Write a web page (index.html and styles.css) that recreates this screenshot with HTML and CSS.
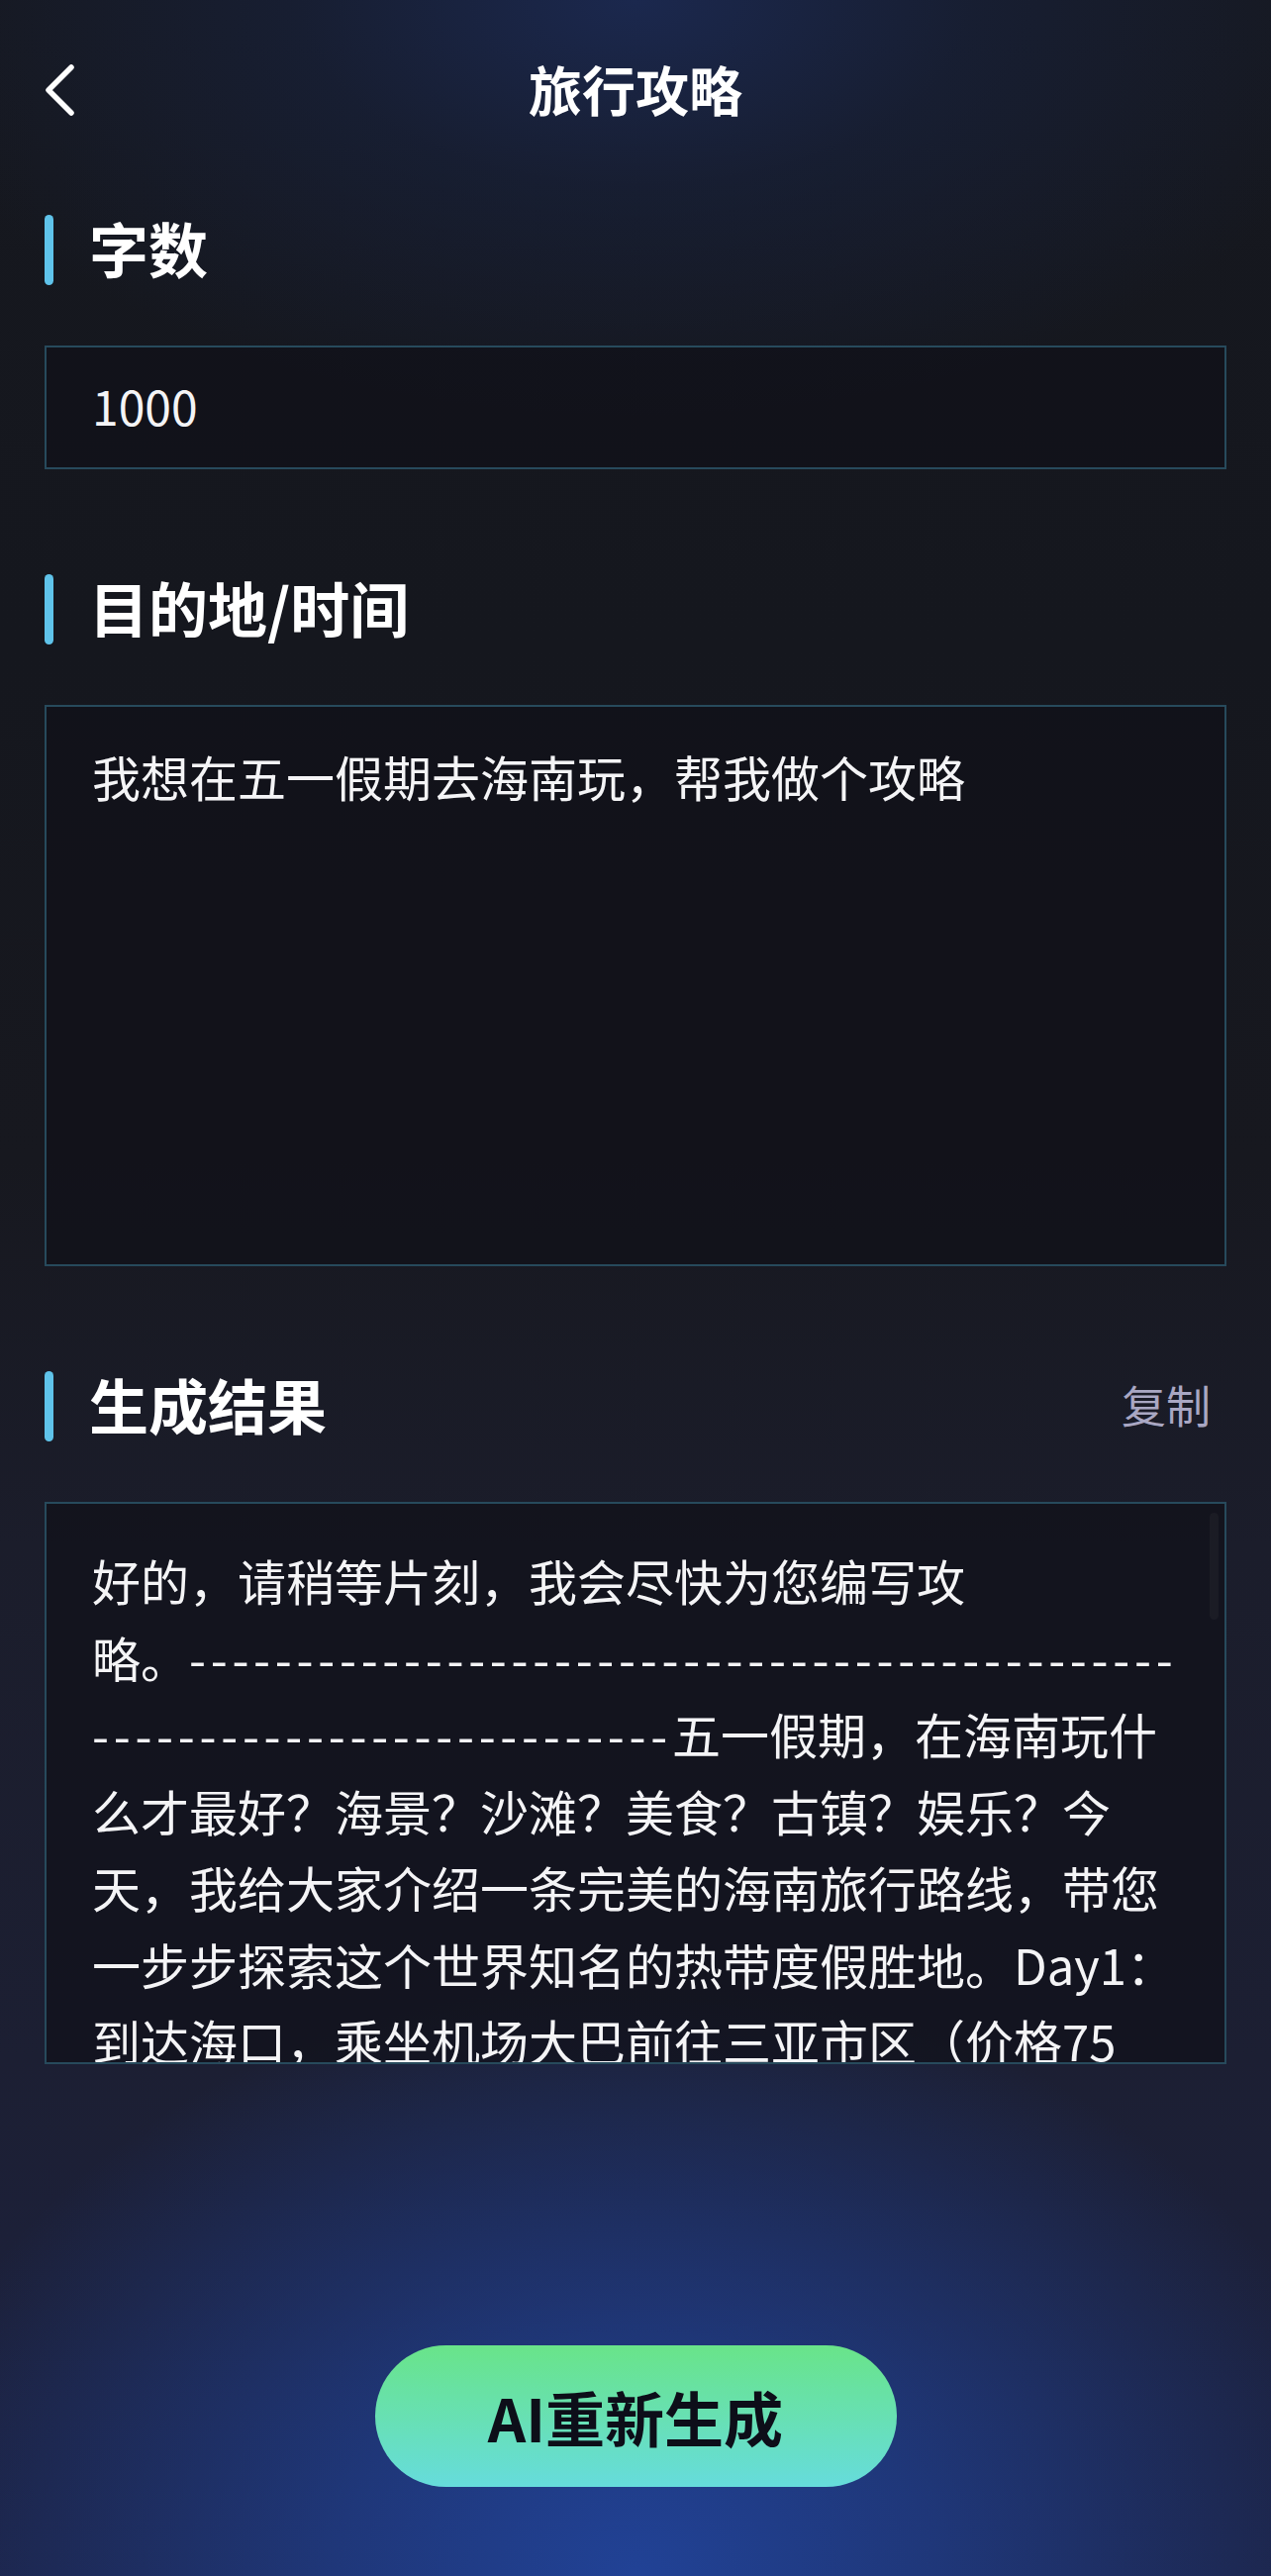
FILE: index.html
```html
<!DOCTYPE html>
<html lang="zh-CN">
<head>
<meta charset="utf-8">
<title>旅行攻略</title>
<link rel="stylesheet" href="styles.css">
</head>
<body>
<div class="page">
  <header class="nav">
    <button class="back" aria-label="返回">
      <svg width="40" height="60" viewBox="0 0 40 60"><polyline points="27,4 4,27 27,50" fill="none" stroke="#fff" stroke-width="5.5" stroke-linecap="round" stroke-linejoin="round"/></svg>
    </button>
    <h1 class="title">旅行攻略</h1>
  </header>

  <section class="section">
    <div class="sec-head"><span class="bar"></span><h2 class="sec-title">字数</h2></div>
    <div class="field field-input">1000</div>
  </section>

  <section class="section">
    <div class="sec-head"><span class="bar"></span><h2 class="sec-title">目的地/时间</h2></div>
    <div class="field field-area">我想在五一假期去海南玩，帮我做个攻略</div>
  </section>

  <section class="section">
    <div class="sec-head"><span class="bar"></span><h2 class="sec-title">生成结果</h2><span class="copy">复制</span></div>
    <div class="field field-result">
      <p class="result-text">好的，请稍等片刻，我会尽快为您编写攻<br>略。<span class="dash">----------------------------------------------</span><br><span class="dash">---------------------------</span>五一假期，在海南玩什<br>么才最好？海景？沙滩？美食？古镇？娱乐？今<br>天，我给大家介绍一条完美的海南旅行路线，带您<br>一步步探索这个世界知名的热带度假胜地。Day1：<br>到达海口，乘坐机场大巴前往三亚市区（价格75</p>
      <span class="scrollbar"></span>
    </div>
  </section>

  <div class="actions">
    <button class="regen">AI重新生成</button>
  </div>
</div>
</body>
</html>
```

FILE: styles.css
```css
* { box-sizing: border-box; }
html, body {
  margin: 0;
  padding: 0;
}
body {
  width: 1284px;
  min-height: 2602px;
  font-family: "Noto Sans CJK SC", "Noto Sans", sans-serif;
  color: #fff;
  background-color: #16181f;
}
.page {
  width: 1284px;
  min-height: 2602px;
  padding: 0 45px;
  display: flex;
  flex-direction: column;
  background:
    radial-gradient(ellipse 760px 600px at 50% 100%, rgba(33, 66, 150, 1) 0%, rgba(32, 62, 140, 0.75) 40%, rgba(30, 50, 110, 0) 100%),
    radial-gradient(ellipse 760px 420px at 50% 0%, rgba(27, 40, 78, 1) 0%, rgba(24, 34, 62, 0.6) 45%, rgba(22, 24, 31, 0) 100%),
    linear-gradient(to bottom, #16181f 0%, #15171e 25%, #17181f 45%, #1b1d2b 60%, #1c1f33 80%, #1c2242 100%);
}
.nav {
  height: 180px;
  position: relative;
  display: flex;
  align-items: center;
  justify-content: center;
}
.back {
  position: absolute;
  left: 0;
  top: 64px;
  width: 40px;
  height: 60px;
  padding: 0;
  margin: 0;
  border: 0;
  background: none;
  display: flex;
  align-items: flex-start;
}
.title {
  margin: 0;
  font-size: 54px;
  font-weight: 700;
  line-height: 1;
}
.section { display: flex; flex-direction: column; }
.section:first-of-type { margin-top: 37px; }
.sec-head {
  height: 71px;
  display: flex;
  align-items: center;
  margin-bottom: 61px;
}
.bar {
  width: 9px;
  height: 71px;
  border-radius: 5px;
  background: #5fc3ea;
  flex: none;
}
.sec-title {
  margin: 0 0 0 36px;
  padding-bottom: 6px;
  font-size: 60px;
  font-weight: 700;
  line-height: 1;
  flex: 1;
}
.copy {
  font-size: 45px;
  color: #a9a7c3;
  margin-right: 16px;
  line-height: 1;
  padding-bottom: 4px;
}
.field {
  border: 2px solid #274a5c;
  background: rgba(16, 17, 25, 0.72);
  margin-bottom: 106px;
  font-size: 49px;
  color: #f4f4f6;
}
.field-input {
  height: 125px;
  display: flex;
  align-items: center;
  padding: 0 46px 5px;
  font-size: 48px;
}
.field-area {
  height: 567px;
  padding: 31px 46px 0;
  line-height: 78px;
}
.field-result {
  height: 568px;
  padding: 38px 46px 0;
  overflow: hidden;
  position: relative;
  margin-bottom: 0;
}
.result-text {
  margin: 0;
  line-height: 77.5px;
  white-space: nowrap;
}
.dash { letter-spacing: 4.7px; }
.scrollbar {
  position: absolute;
  right: 6px;
  top: 9px;
  width: 9px;
  height: 108px;
  border-radius: 5px;
  background: rgba(255, 255, 255, 0.035);
}
.actions {
  margin-top: 284px;
  display: flex;
  justify-content: center;
}
.regen {
  width: 527px;
  height: 143px;
  border: 0;
  border-radius: 72px;
  background: linear-gradient(to bottom, #69e489, #66dcdc);
  color: #0d0e19;
  font-family: "Noto Sans CJK SC", "Noto Sans", sans-serif;
  font-size: 60px;
  font-weight: 700;
  padding: 0;
  line-height: 1;
}
```
